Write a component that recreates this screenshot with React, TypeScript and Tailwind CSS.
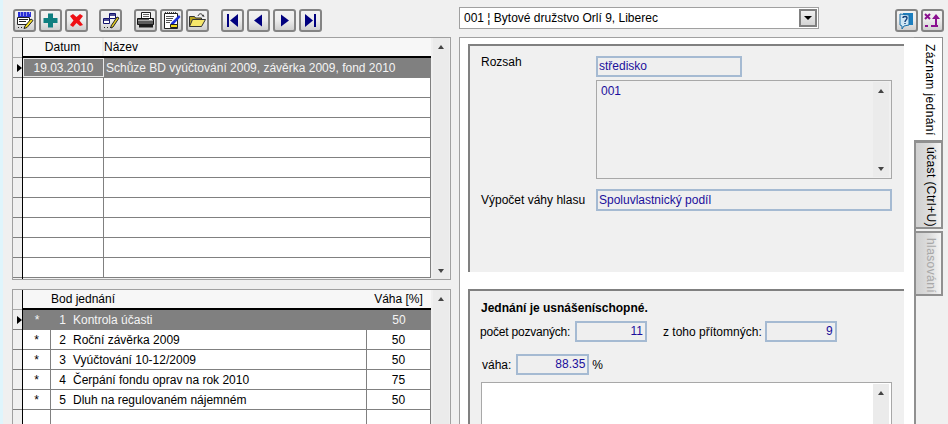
import React from "react";

const ToolButton: React.FC<{ children: React.ReactNode; className?: string }> = ({ children, className = "" }) => (
  <div className={`w-[23px] h-[23px] border-2 border-[#848484] rounded-[3px] bg-gradient-to-b from-[#f2f2f2] via-[#ececec] to-[#cfcfcf] flex items-center justify-center ${className}`}>
    <svg width="19" height="19" viewBox="0 0 19 19">{children}</svg>
  </div>
);

const UpArrow = () => <div className="w-0 h-0 border-x-[3.5px] border-x-transparent border-b-[4px] border-b-[#444]" />;
const DownArrow = () => <div className="w-0 h-0 border-x-[3.5px] border-x-transparent border-t-[4px] border-t-[#444]" />;

const ScrollBar: React.FC<{ className?: string; clipped?: boolean }> = ({ className = "", clipped = false }) => (
  <div className={`w-[16px] bg-[#ebebeb] flex flex-col items-center justify-between pt-[7px] pb-[6px] ${className}`}>
    <UpArrow />
    {!clipped && <DownArrow />}
  </div>
);

const Marker = () => <div className="w-0 h-0 border-y-[4px] border-y-transparent border-l-[5px] border-l-black" />;

const Field: React.FC<{ children?: React.ReactNode; className?: string }> = ({ children, className = "" }) => (
  <div className={`border-2 border-[#a5bad2] bg-[#efefef] text-[#1c0f9c] flex items-center pl-[1px] pb-[1px] ${className}`}>{children}</div>
);

const topRows = Array.from({ length: 11 }, (_, i) => i);
const items = [
  ["1", "Kontrola účasti", "50"],
  ["2", "Roční závěrka 2009", "50"],
  ["3", "Vyúčtování 10-12/2009", "50"],
  ["4", "Čerpání fondu oprav na rok 2010", "75"],
  ["5", "Dluh na regulovaném nájemném", "50"],
  ["", "", ""],
];

export default function App() {
  return (
    <div className="w-[948px] h-[424px] overflow-hidden flex bg-[#f0f0f0] text-[12px] leading-none text-black font-['Liberation_Sans',Arial,sans-serif]">
      <div className="w-[3px] shrink-0 bg-[#dff5fc]" />

      {/* left side */}
      <div className="w-[456px] shrink-0 pl-[9px] pr-[8px] flex flex-col">
        <div className="h-[37px] shrink-0 pt-[9px] pl-[1px] flex">
          <ToolButton>
            <rect x="3" y="1" width="13" height="5" fill="#2a30d8" />
            <path d="M5 2h1M8 2h1M11 2h1M14 2h1M5 4h1M8 4h1M11 4h1" stroke="#fff" />
            <path d="M2.500 6.500h12v7h-12z" fill="#fff" stroke="#222" />
            <path d="M4 8.500h9M4 10.500h7" stroke="#222" />
            <path d="M3 16.500h1M6 16.500h1M9 16.500h1" stroke="#222" />
            <path d="M10 15l6-7 2 1.500-6 7-3 1z" fill="#f5e020" stroke="#222" />
          </ToolButton>
          <ToolButton className="ml-[3px]">
            <path d="M7 2.500h5V7h4.500v5H12v4.500H7V12H2.500V7H7z" fill="#0f7f80" />
          </ToolButton>
          <ToolButton className="ml-[3px]">
            <path d="M3 5l3-2 3.500 3L13 3l3 2-3.500 4.500L16 14l-3 1-3.500-3L6 16l-3-2 3.500-4.500z" fill="#ef0f14" />
          </ToolButton>
          <ToolButton className="ml-[11px]">
            <path d="M8.500 2.500h6v5h-6z" fill="#fff" stroke="#12126e" />
            <path d="M2.500 7.500h6v5h-6z" fill="#fff" stroke="#12126e" />
            <path d="M8.500 4h6M2.500 9h6" stroke="#12126e" strokeWidth="1.500" />
            <path d="M10 15l6-9 2 1-6 9-2 1z" fill="#e8d020" stroke="#222" />
            <path d="M3 16.500h1M6 16.500h1M9 16.500h1" stroke="#222" />
          </ToolButton>
          <ToolButton className="ml-[12px]">
            <path d="M5.500 1.500h9v6h-9z" fill="#fff" stroke="#222" />
            <path d="M7 3.500h6M7 5.500h6" stroke="#666" />
            <path d="M1.500 7.500h16v6h-16z" fill="#5c5c5c" stroke="#111" />
            <path d="M2 9.500h15" stroke="#aaa" />
            <path d="M3 13h14v3.500H3z" fill="#1c1c1c" />
            <path d="M13 8.500h3" stroke="#fff" />
          </ToolButton>
          <ToolButton className="ml-[3px]">
            <path d="M2.500 2.500h13v15h-13z" fill="#fff" stroke="#222" />
            <path d="M3 1.500h1M5 1.500h1M7 1.500h1M9 1.500h1M11 1.500h1M13 1.500h1" stroke="#444" />
            <path d="M4 5.500h8M4 7.500h7M4 9.500h6M4 11.500h4" stroke="#555" />
            <path d="M9 12l8-8 1.500 2-7.500 8-3 1z" fill="#1c30d8" />
            <path d="M8.500 13.500h7v3h-7z" fill="#f0d818" stroke="#222" />
          </ToolButton>
          <ToolButton className="ml-[3px]">
            <path d="M1.500 5.500h5l1 1.500h6v8h-12z" fill="#b8a420" stroke="#333" />
            <path d="M1.500 15.500l3-7h13l-4 7z" fill="#f5e66a" stroke="#333" />
            <path d="M10 5c1-3 4-3 5 0" fill="none" stroke="#333" />
            <path d="M16.500 6l-3-1 2-1.500z" fill="#333" />
          </ToolButton>
          {[
            <g key="first"><path d="M4 3h2v13H4z" fill="#00007f" /><path d="M15 3v13L7 9.500z" fill="#00007f" /></g>,
            <path key="prev" d="M13 3.500v12L5 9.500z" fill="#00007f" />,
            <path key="next" d="M6 3.500v12l8-6z" fill="#00007f" />,
            <g key="last"><path d="M13 3h2v13h-2z" fill="#00007f" /><path d="M4 3v13l8-6.500z" fill="#00007f" /></g>,
          ].map((icon, i) => (
            <ToolButton key={i} className={i === 0 ? "ml-[12px]" : "ml-[3px]"}>{icon}</ToolButton>
          ))}
        </div>

        {/* upper grid */}
        <div className="h-[243px] shrink-0 border border-[#a0a0a0] flex overflow-hidden">
          <div className="w-[9px] shrink-0 bg-[#f0f0f0]">
            <div className="h-[20px] border-b border-[#a8a8a8]" />
            <div className="h-[20px] flex items-center justify-end border-b border-[#808080]"><Marker /></div>
            {topRows.slice(1).map((r) => <div key={r} className="h-[20px] border-b border-[#808080]" />)}
          </div>
          <div className="w-[409px] shrink-0 border-l border-black">
            <div className="h-[20px] flex border-b-2 border-black bg-[#f7f7f7]">
              <div className="w-[81px] text-center pt-[3px] border-r-2 border-[#ececec]">Datum</div>
              <div className="flex-1 pt-[3px]">Název</div>
            </div>
            {topRows.map((r) => (
              <div key={r} className={`h-[20px] flex border-b border-[#808080] ${r === 0 ? "bg-[#808080] text-[#f4f4f4]" : "bg-white"}`}>
                <div className={`w-[81px] flex items-center justify-center ${r === 0 ? "border border-[#e8e8e8]" : "border-r border-[#808080]"}`}>{r === 0 ? "19.03.2010" : ""}</div>
                <div className={`flex-1 flex items-center pl-[2px] ${r === 0 ? "" : "border-r border-[#808080]"}`}>{r === 0 ? "Schůze BD vyúčtování 2009, závěrka 2009, fond 2010" : ""}</div>
              </div>
            ))}
          </div>
          <ScrollBar className="ml-[2px]" />
        </div>

        {/* lower grid */}
        <div className="h-[140px] shrink-0 mt-[9px] border border-[#a0a0a0] flex overflow-hidden">
          <div className="w-[9px] shrink-0">
            <div className="h-[20px] border-b border-[#a8a8a8]" />
            <div className="h-[20px] flex items-center justify-end border-b border-[#808080]"><Marker /></div>
            {items.slice(1).map((it, i) => <div key={i} className="h-[20px] border-b border-[#808080]" />)}
          </div>
          <div className="w-[409px] shrink-0 border-l border-black">
            <div className="h-[20px] flex border-b-2 border-black bg-[#f7f7f7]">
              <div className="w-[28px]" />
              <div className="w-[315px] pt-[3px]">Bod jednání</div>
              <div className="flex-1 pt-[3px] text-center">Váha [%]</div>
            </div>
            {items.map((it, i) => (
              <div key={i} className={`h-[20px] flex border-b border-[#808080] ${i === 0 ? "bg-[#808080] text-[#f4f4f4]" : "bg-white"}`}>
                <div className={`w-[28px] flex items-center justify-center ${i === 0 ? "" : "border-r border-[#808080]"}`}>{it[0] ? "*" : ""}</div>
                <div className="w-[15px] flex items-center justify-end">{it[0]}</div>
                <div className={`w-[301px] flex items-center pl-[7px] ${i === 0 ? "" : "border-r border-[#808080]"}`}>{it[1]}</div>
                <div className={`flex-1 flex items-center justify-center ${i === 0 ? "" : "border-r border-[#808080]"}`}>{it[2]}</div>
              </div>
            ))}
          </div>
          <ScrollBar className="ml-[2px]" clipped />
        </div>
      </div>

      {/* right side */}
      <div className="flex-1 flex flex-col min-w-0">
        <div className="h-[37px] shrink-0 flex pt-[7px]">
          <div className="w-[360px] h-[22px] border border-[#a0a0a0] bg-white flex items-center justify-between pl-[4px] pr-[1px]">
            <span>001 ¦ Bytové družstvo Orlí 9, Liberec</span>
            <div className="w-[18px] h-[18px] border-2 border-[#808080] bg-gradient-to-b from-[#f0f0f0] to-[#d4d4d4] flex items-center justify-center">
              <div className="w-0 h-0 border-x-[4px] border-x-transparent border-t-[4px] border-t-black" />
            </div>
          </div>
          <ToolButton className="ml-[76px] mt-[2px]">
            <path d="M6 2h10v12H6z" fill="#1c7fc0" />
            <path d="M3 3l9 1v10l-5 1-2 3v-3l-2-1z" fill="#cfe6f4" stroke="#1a6fa8" />
            <path d="M6 7c0-2 4-2 4 0 0 2-2 2-2 4M8 12v1" fill="none" stroke="#123f7a" strokeWidth="1.400" />
          </ToolButton>
          <ToolButton className="ml-[3px] mt-[2px]">
            <path d="M2 3l5 5M7 3L2 8" stroke="#8a1090" strokeWidth="2" />
            <path d="M13 3l4 5h-3v6h-2V8H9z" fill="#8a1090" />
            <path d="M2 14h3v2H2zM8 14h7v2H8z" fill="#8a1090" />
          </ToolButton>
        </div>

        <div className="flex-1 flex min-h-0">
          {/* page */}
          <div className="w-[455px] shrink-0 bg-white border-l border-t border-[#a0a0a0] pt-[6px] pl-[8px] pr-[10px] flex flex-col">
            <div className="h-[228px] shrink-0 border-l-2 border-t-2 border-[#808080] bg-[#f0f0f0] pl-[11px] pr-[12px] flex flex-col">
              <div className="flex mt-[10px]">
                <div className="w-[115px]">Rozsah</div>
                <Field className="w-[146px] h-[21px]">středisko</Field>
              </div>
              <div className="ml-[115px] mt-[3px] h-[99px] border border-[#a8a8a8] flex">
                <div className="flex-1 text-[#1c0f9c] pl-[4px] pt-[4px]">001</div>
                <ScrollBar className="mr-[2px] my-[1px]" />
              </div>
              <div className="flex items-center mt-[10px]">
                <div className="w-[115px]">Výpočet váhy hlasu</div>
                <Field className="w-[296px] h-[22px]">Spoluvlastnický podíl</Field>
              </div>
            </div>

            <div className="mt-[17px] flex-1 border-l-2 border-t-2 border-[#808080] bg-[#f0f0f0] pl-[11px] pr-[12px] flex flex-col">
              <div className="font-bold mt-[11px]">Jednání je usnášeníschopné.</div>
              <div className="flex items-center mt-[7px]">
                <span className="w-[90px] -ml-[1px] tracking-[-0.2px] whitespace-nowrap">počet pozvaných:</span>
                <Field className="ml-[5px] w-[72px] h-[21px] justify-end pr-[2px]">11</Field>
                <span className="ml-[16px]">z toho přítomných:</span>
                <Field className="ml-[3px] w-[72px] h-[21px] justify-end pr-[2px]">9</Field>
              </div>
              <div className="flex items-center mt-[12px] pl-[1px]">
                <span>váha:</span>
                <Field className="ml-[5px] w-[73px] h-[21px] justify-end pr-[2px]">88.35</Field>
                <span className="ml-[3px]">%</span>
              </div>
              <div className="mt-[7px] flex-1 w-[411px] bg-white border-l border-t border-r border-[#a8a8a8] flex justify-end">
                <ScrollBar className="mr-[2px] mt-[1px]" clipped />
              </div>
            </div>
          </div>

          {/* tabs */}
          <div className="flex-1 flex flex-col items-start">
            <div className="w-[29px] h-[104px] bg-white border-t border-r border-b border-[#909090] flex items-center pl-[3px] pt-[6px] tracking-[0.4px] whitespace-nowrap [writing-mode:vertical-rl]">Záznam jednání</div>
            <div className="flex-1 border-l-2 border-[#909090] flex flex-col">
              <div className="w-[27px] h-[88px] border-2 border-l-0 border-[#909090] bg-gradient-to-r from-[#d0d0d0] via-[#dcdcdc] to-[#f4f4f4] flex items-center pl-[5px] pt-[4px] tracking-[0.4px] whitespace-nowrap [writing-mode:vertical-rl]">účast (Ctrl+U)</div>
              <div className="w-[27px] h-[65px] mt-[2px] border-2 border-l-0 border-[#909090] bg-gradient-to-r from-[#d0d0d0] via-[#dcdcdc] to-[#f4f4f4] text-[#a8a8a8] flex items-center pl-[5px] pt-[5px] tracking-[0.4px] whitespace-nowrap [writing-mode:vertical-rl]">hlasování</div>
            </div>
          </div>
        </div>
      </div>
    </div>
  );
}
